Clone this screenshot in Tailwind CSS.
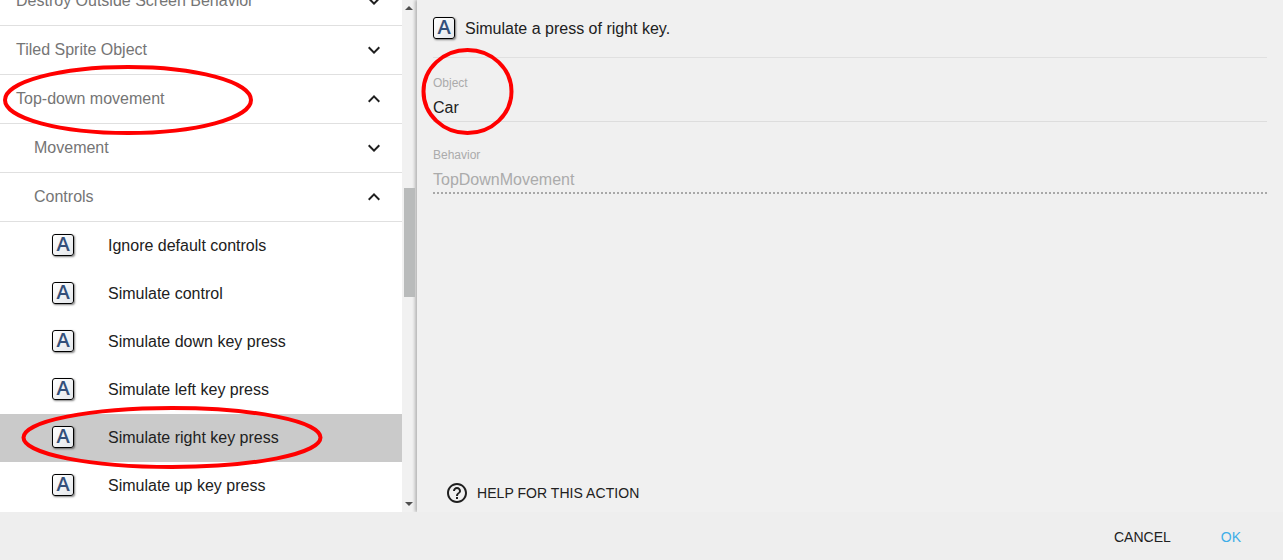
<!DOCTYPE html>
<html lang="en">
<head>
    <meta charset="UTF-8">
    <title>Simulate right key press</title>
    <script src="https://cdn.jsdelivr.net/npm/@tailwindcss/browser@4"></script>
</head>
<body class="font-['Liberation_Sans',Arial,sans-serif] bg-[#eeeeee] overflow-hidden">
    <div class="relative w-[1283px] h-[560px] overflow-hidden">
        <main class="flex h-[512px] overflow-hidden">
            <!-- instruction list -->
            <section class="w-[402px] shrink-0 h-full overflow-hidden bg-white">
                <div class="-mt-[23px]">
                    <div class="h-[49px] border-b border-[#e0e0e0] pl-4 pr-4 flex items-center justify-between text-[16px] text-[#757575]">
                        <span>Destroy Outside Screen Behavior</span>
                        <svg class="w-6 h-6" viewBox="0 0 24 24" fill="#1f1f1f"><path d="M7.41 8.59 12 13.17l4.59-4.58L18 10l-6 6-6-6z"/></svg>
                    </div>
                    <div class="h-[49px] border-b border-[#e0e0e0] pl-4 pr-4 flex items-center justify-between text-[16px] text-[#757575]">
                        <span>Tiled Sprite Object</span>
                        <svg class="w-6 h-6" viewBox="0 0 24 24" fill="#1f1f1f"><path d="M7.41 8.59 12 13.17l4.59-4.58L18 10l-6 6-6-6z"/></svg>
                    </div>
                    <div class="h-[49px] border-b border-[#e0e0e0] pl-4 pr-4 flex items-center justify-between text-[16px] text-[#757575]">
                        <span>Top-down movement</span>
                        <svg class="w-6 h-6" viewBox="0 0 24 24" fill="#1f1f1f"><path d="M12 8l-6 6 1.41 1.41L12 10.83l4.59 4.58L18 14z"/></svg>
                    </div>
                    <div class="h-[49px] border-b border-[#e0e0e0] pl-[34px] pr-4 flex items-center justify-between text-[16px] text-[#757575]">
                        <span>Movement</span>
                        <svg class="w-6 h-6" viewBox="0 0 24 24" fill="#1f1f1f"><path d="M7.41 8.59 12 13.17l4.59-4.58L18 10l-6 6-6-6z"/></svg>
                    </div>
                    <div class="h-[49px] border-b border-[#e0e0e0] pl-[34px] pr-4 flex items-center justify-between text-[16px] text-[#757575]">
                        <span>Controls</span>
                        <svg class="w-6 h-6" viewBox="0 0 24 24" fill="#1f1f1f"><path d="M12 8l-6 6 1.41 1.41L12 10.83l4.59 4.58L18 14z"/></svg>
                    </div>
                    <ul class="text-[16px] text-[#212121]">
                        <li class="h-12 pl-[52px] flex items-center gap-[34px]">
                            <span class="w-[22px] h-[22px] mb-[2px] pb-[2px] flex items-center justify-center rounded-[3px] border border-black bg-gradient-to-br from-white to-[#e4e7eb] shadow-[1px_1px_2px_rgba(0,0,0,.5)] text-[#34507a] font-['Open_Sans',sans-serif] font-semibold text-[20px] leading-none">A</span>
                            <span>Ignore default controls</span>
                        </li>
                        <li class="h-12 pl-[52px] flex items-center gap-[34px]">
                            <span class="w-[22px] h-[22px] mb-[2px] pb-[2px] flex items-center justify-center rounded-[3px] border border-black bg-gradient-to-br from-white to-[#e4e7eb] shadow-[1px_1px_2px_rgba(0,0,0,.5)] text-[#34507a] font-['Open_Sans',sans-serif] font-semibold text-[20px] leading-none">A</span>
                            <span>Simulate control</span>
                        </li>
                        <li class="h-12 pl-[52px] flex items-center gap-[34px]">
                            <span class="w-[22px] h-[22px] mb-[2px] pb-[2px] flex items-center justify-center rounded-[3px] border border-black bg-gradient-to-br from-white to-[#e4e7eb] shadow-[1px_1px_2px_rgba(0,0,0,.5)] text-[#34507a] font-['Open_Sans',sans-serif] font-semibold text-[20px] leading-none">A</span>
                            <span>Simulate down key press</span>
                        </li>
                        <li class="h-12 pl-[52px] flex items-center gap-[34px]">
                            <span class="w-[22px] h-[22px] mb-[2px] pb-[2px] flex items-center justify-center rounded-[3px] border border-black bg-gradient-to-br from-white to-[#e4e7eb] shadow-[1px_1px_2px_rgba(0,0,0,.5)] text-[#34507a] font-['Open_Sans',sans-serif] font-semibold text-[20px] leading-none">A</span>
                            <span>Simulate left key press</span>
                        </li>
                        <li class="h-12 pl-[52px] flex items-center gap-[34px] bg-[#cacaca]">
                            <span class="w-[22px] h-[22px] mb-[2px] pb-[2px] flex items-center justify-center rounded-[3px] border border-black bg-gradient-to-br from-white to-[#e4e7eb] shadow-[1px_1px_2px_rgba(0,0,0,.5)] text-[#34507a] font-['Open_Sans',sans-serif] font-semibold text-[20px] leading-none">A</span>
                            <span>Simulate right key press</span>
                        </li>
                        <li class="h-12 pl-[52px] flex items-center gap-[34px]">
                            <span class="w-[22px] h-[22px] mb-[2px] pb-[2px] flex items-center justify-center rounded-[3px] border border-black bg-gradient-to-br from-white to-[#e4e7eb] shadow-[1px_1px_2px_rgba(0,0,0,.5)] text-[#34507a] font-['Open_Sans',sans-serif] font-semibold text-[20px] leading-none">A</span>
                            <span>Simulate up key press</span>
                        </li>
                    </ul>
                </div>
            </section>
            <!-- scrollbar -->
            <div class="w-[15px] shrink-0 h-full bg-[#f1f1f1] flex flex-col items-center justify-between py-[6px] pr-[1px]">
                <span class="w-0 h-0 border-x-[4px] border-x-transparent border-b-[4px] border-b-[#505050]"></span>
                <span class="w-0 h-0 border-x-[4px] border-x-transparent border-t-[4px] border-t-[#505050]"></span>
            </div>
            <!-- parameters -->
            <section class="relative flex-1 h-full bg-[#f0f0f0] px-4 shadow-[-2px_0_3px_rgba(0,0,0,.25)] flex flex-col">
                <div class="h-[58px] border-b border-[#e0e0e0] flex items-center gap-[10px] text-[16px] text-[#212121]">
                    <span class="w-[22px] h-[22px] mb-[2px] pb-[2px] flex items-center justify-center rounded-[3px] border border-black bg-gradient-to-br from-white to-[#e4e7eb] shadow-[1px_1px_2px_rgba(0,0,0,.5)] text-[#34507a] font-['Open_Sans',sans-serif] font-semibold text-[20px] leading-none">A</span>
                    <span>Simulate a press of right key.</span>
                </div>
                <div class="h-[64px] border-b border-[#dddddd] pt-[18px]">
                    <div class="text-[12px] leading-[14px] text-[#ababab]">Object</div>
                    <div class="text-[16px] leading-[18px] mt-[9px] text-[#212121]">Car</div>
                </div>
                <div class="h-[72px] pt-[26px] border-b-2 border-dotted border-[#a8a8a8]">
                    <div class="text-[12px] leading-[14px] text-[#ababab]">Behavior</div>
                    <div class="text-[16px] leading-[18px] mt-[9px] text-[#ababab]">TopDownMovement</div>
                </div>
                <div class="mt-auto mb-[7px] ml-3 flex items-center gap-2 h-6 text-[14px] tracking-[0.05px] text-[#212121]">
                    <svg class="w-6 h-6" viewBox="0 0 24 24" fill="#1f1f1f"><path d="M11 18h2v-2h-2v2zm1-16C6.48 2 2 6.48 2 12s4.48 10 10 10 10-4.48 10-10S17.52 2 12 2zm0 18c-4.41 0-8-3.59-8-8s3.59-8 8-8 8 3.59 8 8-3.59 8-8 8zm0-14c-2.21 0-4 1.79-4 4h2c0-1.1.9-2 2-2s2 .9 2 2c0 2-3 1.75-3 5h2c0-2.25 3-2.5 3-5 0-2.21-1.79-4-4-4z"/></svg>
                    <span>HELP FOR THIS ACTION</span>
                </div>
            </section>
        </main>
        <footer class="h-[48px] flex items-center justify-end pr-[42px] pt-[2px] gap-[50px] text-[14px] text-[#212121]">
            <span>CANCEL</span>
            <span class="text-[#3eaee8]">OK</span>
        </footer>
        <!-- red annotations drawn over the screenshot -->
        <svg class="absolute inset-0 pointer-events-none blur-[0.4px]" width="1283" height="560" fill="none" stroke="#ff0000" stroke-width="4">
            <ellipse cx="128" cy="100" rx="123" ry="33"/>
            <ellipse cx="172" cy="437.5" rx="148.5" ry="29.5"/>
            <ellipse cx="467.5" cy="91.5" rx="44" ry="41.5"/>
        </svg>
        <div class="absolute left-[404px] top-[188px] w-[11px] h-[109px] bg-[#b9bbbb]"></div>
    </div>
</body>
</html>
